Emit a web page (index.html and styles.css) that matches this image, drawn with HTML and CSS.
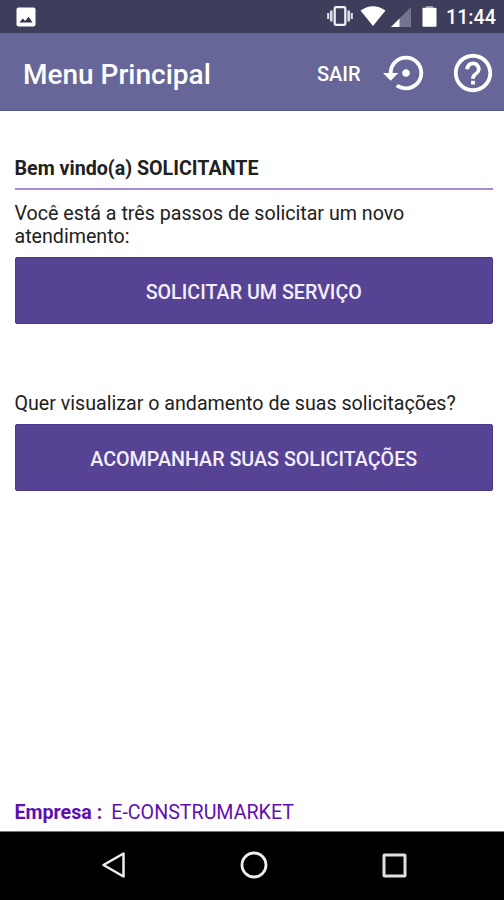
FILE: index.html
```
<!DOCTYPE html>
<html lang="pt-BR">

<head>
    <meta charset="UTF-8">
    <meta name="viewport" content="width=device-width, initial-scale=1.0">
    <title>Menu Principal</title>
    <link rel="stylesheet" href="styles.css">
</head>

<body>
    <div class="statusBar">
        <svg class="picture" width="20" height="20" viewBox="0 0 20 20">
            <rect x="0.5" y="0.5" width="19" height="19" rx="2" fill="#fff" />
            <path d="M3.5 15.5l3.3-4 2.4 2.5 3.4-4.2 4 5.7z" fill="#33334f" />
        </svg>
        <div class="statusIcons">
            <svg class="vibrate" width="28" height="20" viewBox="0 0 28 20">
                <rect x="8.7" y="1.2" width="10.6" height="17.6" rx="1" fill="none" stroke="#f4f4f8" stroke-width="2.2" />
                <path d="M5.3 4.5v11M22.7 4.5v11" stroke="#dcdce6" stroke-width="2.6" />
                <path d="M2.2 7v6M25.8 7v6" stroke="#dcdce6" stroke-width="2.2" />
            </svg>
            <svg class="wifi" width="26" height="20" viewBox="0 0 26 20">
                <path d="M0.5 4.5Q13-4 25.5 4.5L13 20z" fill="#fff" />
            </svg>
            <svg class="signal" width="20" height="20" viewBox="0 0 20 20">
                <path d="M0 20L20 0v20z" fill="#74748f" />
                <path d="M0 20l8.5-8.5V20z" fill="#fff" />
            </svg>
            <svg class="battery" width="15" height="21" viewBox="0 0 15 21">
                <path d="M4 0h7v2h-7z" fill="#9a9aae" />
                <rect x="0.5" y="1.8" width="14" height="19" rx="1" fill="#fff" />
            </svg>
            <span class="clock">11:44</span>
        </div>
    </div>

    <div class="header">
        <h1>Menu Principal</h1>
        <div class="actions">
            <span class="sair">SAIR</span>
            <svg class="restore" width="46" height="46" viewBox="0 0 24 24">
                <path fill="#fff" d="M14 12c0-1.1-.9-2-2-2s-2 .9-2 2 .9 2 2 2 2-.9 2-2zm-2-9c-4.97 0-9 4.03-9 9H0l4 4 4-4H5c0-3.87 3.13-7 7-7s7 3.13 7 7-3.13 7-7 7c-1.51 0-2.91-.49-4.06-1.3l-1.42 1.44C8.04 20.3 9.94 21 12 21c4.97 0 9-4.03 9-9s-4.03-9-9-9z" />
            </svg>
            <svg class="help" width="46" height="46" viewBox="0 0 24 24">
                <path fill="#fff" d="M11 18h2v-2h-2v2zm1-16C6.48 2 2 6.48 2 12s4.48 10 10 10 10-4.48 10-10S17.52 2 12 2zm0 18c-4.41 0-8-3.59-8-8s3.59-8 8-8 8 3.59 8 8-3.59 8-8 8zm0-14c-2.21 0-4 1.79-4 4h2c0-1.1.9-2 2-2s2 .9 2 2c0 2-3 1.75-3 5h2c0-2.25 3-2.5 3-5 0-2.21-1.79-4-4-4z" />
            </svg>
        </div>
    </div>

    <div class="content">
        <h2>Bem vindo(a) SOLICITANTE</h2>
        <p class="passos">Você está a três passos de solicitar um novo<br>atendimento:</p>
        <button>SOLICITAR UM SERVIÇO</button>
        <p class="andamento">Quer visualizar o andamento de suas solicitações?</p>
        <button>ACOMPANHAR SUAS SOLICITAÇÕES</button>
        <div class="empresa"><b>Empresa :</b><span>E-CONSTRUMARKET</span></div>
    </div>

    <div class="navBar">
        <svg width="28" height="30" viewBox="0 0 28 30">
            <path d="M23.5 3.5v23L3.5 15z" fill="none" stroke="#eee" stroke-width="2.5" stroke-linejoin="round" />
        </svg>
        <svg width="28" height="30" viewBox="0 0 28 30">
            <circle cx="14" cy="15" r="12" fill="none" stroke="#eee" stroke-width="2.8" />
        </svg>
        <svg width="28" height="30" viewBox="0 0 28 30">
            <rect x="4" y="5" width="21" height="21" rx="0.5" fill="none" stroke="#e0e0e0" stroke-width="3" />
        </svg>
    </div>
</body>

</html>
```

FILE: styles.css
```
* {
    box-sizing: border-box;
}

body {
    margin: 0;
    height: 900px;
    display: flex;
    flex-direction: column;
    overflow: hidden;
    background: #fff;
    color: #212121;
    font-family: Roboto, "Liberation Sans", sans-serif;
    font-size: 19.65px;
}

svg {
    display: block;
    flex: none;
}

h1, h2, p {
    margin: 0;
}

.statusBar {
    height: 33px;
    flex: none;
    display: flex;
    justify-content: space-between;
    padding: 0 8px 0 16px;
    background: #3e3e5c;
}

.picture {
    margin-top: 7px;
}

.statusIcons {
    display: flex;
    padding-top: 6px;
}

.wifi {
    margin-left: 6px;
}

.signal {
    margin: 1px 0 0 5px;
}

.battery {
    margin-left: 11px;
}

.clock {
    width: 50px;
    margin-left: 9px;
    color: #fff;
    font-weight: 500;
    line-height: 23px;
    white-space: nowrap;
}

.header {
    height: 78px;
    flex: none;
    display: flex;
    align-items: center;
    justify-content: space-between;
    padding: 2px 8px 0 23px;
    background: #666699;
    border-bottom: 1px solid #57578c;
    color: #fff;
}

h1 {
    font-size: 28px;
    font-weight: 500;
    line-height: 36px;
    padding-top: 4px;
}

.actions {
    display: flex;
    align-items: center;
}

.sair {
    width: 66px;
    font-size: 20px;
    font-weight: 500;
    padding-top: 2px;
}

.help {
    margin-left: 21px;
}

.content {
    flex: 1;
    display: flex;
    flex-direction: column;
    padding: 0 11px 6px 14.5px;
}

h2 {
    height: 79px;
    padding-top: 46px;
    border-bottom: 2px solid #a48bd4;
    font-size: 19.65px;
    font-weight: 700;
    line-height: 24px;
}

p {
    white-space: nowrap;
}

.passos {
    height: 67px;
    padding-top: 12px;
    line-height: 23px;
}

button {
    height: 67px;
    flex: none;
    padding: 4px 0 0;
    border: 1px solid #49358a;
    border-radius: 2px;
    background: #574393;
    color: #f3eefb;
    font: 500 19.7px Roboto, "Liberation Sans", sans-serif;
}

.andamento {
    height: 100px;
    padding-top: 68px;
    line-height: 23px;
}

.empresa {
    margin-top: auto;
    color: #5f0fb0;
    line-height: 24px;
}

.empresa span {
    margin-left: 9px;
}

.navBar {
    height: 69px;
    flex: none;
    display: flex;
    justify-content: space-between;
    padding: 18px 96px 0 100px;
    border-top: 1px solid #777;
    background: #000;
}
```
